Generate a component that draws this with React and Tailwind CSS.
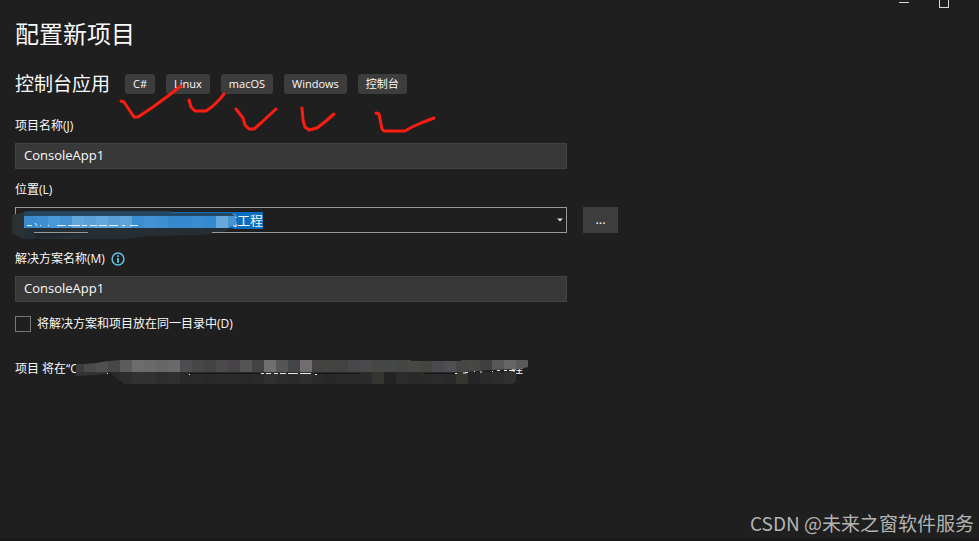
// src/App.jsx
import { useState } from 'react';

const TAGS = ['C#', 'Linux', 'macOS', 'Windows', '控制台'];

// Red pen marks under the tags
const MARKS = [
  '121,101 124,102 134,117 138,117 153,107 168,96 181,86',
  '189,100 191,107 195,111 206,111 213,106 220,99 224,94',
  '236,109 243,118 245,125 249,129 254,129 262,122 276,109',
  '302,108 303,120 305,127 309,130 317,128 326,121 334,114',
  '376,113 379,114 382,129 384,131 405,131 412,127 421,123 434,118',
];

// Mosaic cells, 12px each
const PATH_CELLS = [
  '#3b8ccf', '#3f90d2', '#4b99d8', '#4291d2', '#62a7dc', '#5aa1d9', '#64a9de', '#579fd6', '#5ea5da',
  '#3b8dd0', '#4392d3', '#4090d1', '#3689cd', '#3589ce', '#3a8bcf', '#358acf', '#67a9dc', '#4993d0',
];

const SUMMARY_CELLS = [
  '#3c3c3d', '#4a4a4b', '#505051', '#474748', '#5b5b5b', '#6b6c6b', '#696a69', '#666666', '#6a6a6a',
  '#4c4d50', '#484747', '#434242', '#4c494d', '#464447', '#545454', '#424244', '#716e70', '#555556',
  '#434548', '#716c70', '#434240', '#434341', '#424242', '#48484a', '#4a4a4c', '#464644', '#464846',
  '#434444', '#474744', '#454441', '#4a4a4e', '#4e4f52', '#454545', '#474744', '#3f3f3f', '#595859',
  '#666566', '#5a5958',
];

const SUMMARY_CELLS_LOW = [
  '#2d2d2d', '#303130', '#303130', '#2c2d2c', '#2e2f2e', '#292929', '#2a2a2a', '#282828', '#2a2a29',
  '#2b2b2b', '#272828', '#2a2a2a', '#303030', '#2d2c2d', '#2a2a2b', '#2e2e2e', '#2a2a29', '#272727',
  '#2a2b2a', '#292a2a', '#2b2b2b', '#353530', '#232323', '#2c2c2c', '#282928', '#2a2a2a', '#2c2c2e',
  '#292929', '#353530', '#252525', '#2a2a2a', '#2c2c2d', '#303031',
];

function PenMarks() {
  return (
    <svg className="absolute top-0 left-0 pointer-events-none" width="430" height="66" viewBox="15 70 430 66" aria-hidden="true">
      {MARKS.map((points) => (
        <polyline key={points} points={points} fill="none" stroke="#fb1d12" strokeWidth="3" strokeLinecap="round" strokeLinejoin="round" />
      ))}
    </svg>
  );
}

function PathMosaic() {
  return (
    <svg className="absolute top-0 -left-1 pointer-events-none" width="256" height="36" viewBox="12 208 256 36" aria-hidden="true">
      <path d="M12 215 L24 212 V228 L33 230 L37 239 L24 239 L12 234 Z" fill="#2b3032" />
      <path d="M24 216 V212 L28 211 H171 V213 H230 L236 216 Z" fill="#254661" />
      <path d="M24 228 H234 L222 232 L200 235 L150 236 L125 239 H24 Z" fill="#252e35" />
      <path d="M33 230 L37 239 L45 237 L88 234 V232 H34 Z" fill="#20262b" />
      <path d="M34 232.500 H88 M212 232.500 H267" stroke="#999999" strokeWidth="1" />
      <clipPath id="path-clip">
        <path d="M24 216 H235 L237 223 L228 228 H24 Z" />
      </clipPath>
      <g clipPath="url(#path-clip)">
        {PATH_CELLS.map((color, i) => (
          <rect key={i} x={24 + i * 12} y="216" width="12" height="12" fill={color} />
        ))}
      </g>
      <path d="M27 225.500 H32 M35 223 L37 226 M40 225.500 H41 M48 225.500 H49 M57 225.500 H66 M68 225.500 H80 M82 225.500 H87 M90 225.500 H97 M99 225.500 H107 M109 225.500 H118 M122 225.500 H125 M130 225.500 H138" stroke="#e4eff8" strokeWidth="1" />
    </svg>
  );
}

function SummaryMosaic() {
  return (
    <svg className="absolute -top-px left-0 pointer-events-none" width="516" height="26" viewBox="15 360 516 26" aria-hidden="true">
      <clipPath id="summary-clip">
        <path d="M76 364 H84 L96 363 L108 361 L120 360 H411 V361 H461 V360 H528 V367 L520 369 L490 370 L465 372 H120 L95 375 L76 376 Z" />
      </clipPath>
      <clipPath id="summary-clip-low">
        <path d="M110 372 H516 V382 L512 384 H123 V381 H119 Z" />
      </clipPath>
      <g clipPath="url(#summary-clip-low)">
        {SUMMARY_CELLS_LOW.map((color, i) => (
          <rect key={i} x={120 + i * 12} y="372" width="12" height="12" fill={color} />
        ))}
        <rect x="108" y="372" width="12" height="12" fill="#2b2b2b" />
      </g>
      <g clipPath="url(#summary-clip)">
        {SUMMARY_CELLS.map((color, i) => (
          <rect key={i} x={72 + i * 12} y="360" width="12" height="12" fill={color} />
        ))}
        <rect x="76" y="372" width="32" height="4" fill="#333333" />
      </g>
      <path d="M190 373.500 H260 M315 373.500 H360 M424 373.500 H455" stroke="#161616" strokeWidth="1" />
      <path d="M107 373.500 H108 M189 374.500 H190 M261 373.500 H264 M266 373.500 H271 M274 373.500 H278 M280 373.500 H286 M288 373.500 H298 M300 373.500 H311 M315 374.500 H317 M455 373.500 H457 M463 373 H466 M465 372.500 H468 M474 371.500 H475 M480 372 H482 M492 371.500 H493 M497 370.500 H500 M504 370.500 H507 M509 370.500 H515" stroke="#e8e8e8" strokeWidth="1" />
    </svg>
  );
}

function TextField({ id, label, info, value, onChange, className }) {
  return (
    <div className={className}>
      <div className="flex items-center gap-1.5 h-4">
        <label htmlFor={id} className="text-xs">{label}</label>
        {info && (
          <svg width="14" height="14" viewBox="0 0 14 14" aria-hidden="true">
            <circle cx="7" cy="7" r="5.900" fill="none" stroke="#5fc3e8" strokeWidth="1.500" />
            <path d="M7 3.200V4.900M7 6V10.800" stroke="#5fc3e8" strokeWidth="1.800" />
          </svg>
        )}
      </div>
      <input
        id={id}
        type="text"
        value={value}
        onChange={(e) => onChange(e.target.value)}
        className="block mt-[9px] w-full max-w-[552px] h-[26px] px-2 pb-0.5 text-[13px] bg-[#383838] border border-[#434343] outline-none"
      />
    </div>
  );
}

function App() {
  const [projectName, setProjectName] = useState('ConsoleApp1');
  const [location, setLocation] = useState('式工程');
  const [solutionName, setSolutionName] = useState('ConsoleApp1');
  const [sameFolder, setSameFolder] = useState(false);

  return (
    <div className="min-h-screen flex flex-col bg-[#1f1f1f] text-[#fafafa] border-r border-b-2 border-[#1a181a] font-['Open_Sans','Noto_Sans_CJK_SC',sans-serif]">
      {/* Window buttons */}
      <header className="flex justify-end items-start gap-[30px] h-2 pr-[29px]">
        <button type="button" aria-label="最小化" className="w-2.5 h-[3px] border-b border-[#d6d6d6]" />
        <button type="button" aria-label="最大化" className="w-2.5 h-2 border border-t-0 border-[#d6d6d6]" />
      </header>

      <main className="flex-1 px-[15px] pt-2.5">
        <h1 className="text-2xl leading-8">配置新项目</h1>

        <div className="relative flex items-center gap-[15px] h-7 mt-5">
          <h2 className="text-[19px]">控制台应用</h2>
          <ul className="flex gap-[11px]">
            {TAGS.map((tag) => (
              <li key={tag} className="h-5 px-2 rounded-[3px] bg-[#3d3d3d] text-[11px] leading-5">{tag}</li>
            ))}
          </ul>
          <PenMarks />
        </div>

        <TextField id="project" label="项目名称(J)" value={projectName} onChange={setProjectName} className="mt-5" />

        <div className="mt-[13px]">
          <label htmlFor="location" className="block text-xs leading-4">位置(L)</label>
          <div className="flex gap-4 mt-[9px]">
            <div className="relative flex items-center w-full max-w-[552px] h-[26px] pl-2 border border-[#999999]">
              <input
                id="location"
                type="text"
                value={location}
                onChange={(e) => setLocation(e.target.value)}
                className="w-[239px] h-[17px] pb-0.5 bg-[#0a6dc0] text-right text-[13px] leading-4 outline-none"
              />
              <button type="button" aria-label="展开" className="ml-auto w-3 h-full flex items-center justify-center">
                <svg width="6" height="4" viewBox="0 0 6 4" aria-hidden="true">
                  <path d="M0 0.500H6L3 3.500Z" fill="#e0e0e0" />
                </svg>
              </button>
              <PathMosaic />
            </div>
            <button type="button" aria-label="浏览" className="w-[35px] h-[26px] shrink-0 bg-[#3d3d3d] text-[13px]">...</button>
          </div>
        </div>

        <TextField id="solution" label="解决方案名称(M)" info value={solutionName} onChange={setSolutionName} className="mt-[18px]" />

        <label className="flex items-center gap-1.5 h-4 mt-3.5 text-xs">
          <input
            type="checkbox"
            checked={sameFolder}
            onChange={(e) => setSameFolder(e.target.checked)}
            className="appearance-none size-4 border border-[#777777] checked:bg-[#0a6dc0]"
          />
          将解决方案和项目放在同一目录中(D)
        </label>

        <p className="relative flex justify-between max-w-[508px] mt-[29px] text-xs leading-4">
          <span>项目 将在“C</span>
          <span>程</span>
          <SummaryMosaic />
        </p>
      </main>

      <footer className="pr-1 pb-1 text-right text-[19px] leading-6 text-[#b4b4b4] font-['Noto_Sans_CJK_SC',sans-serif]">CSDN @未来之窗软件服务</footer>
    </div>
  );
}

export default App;
